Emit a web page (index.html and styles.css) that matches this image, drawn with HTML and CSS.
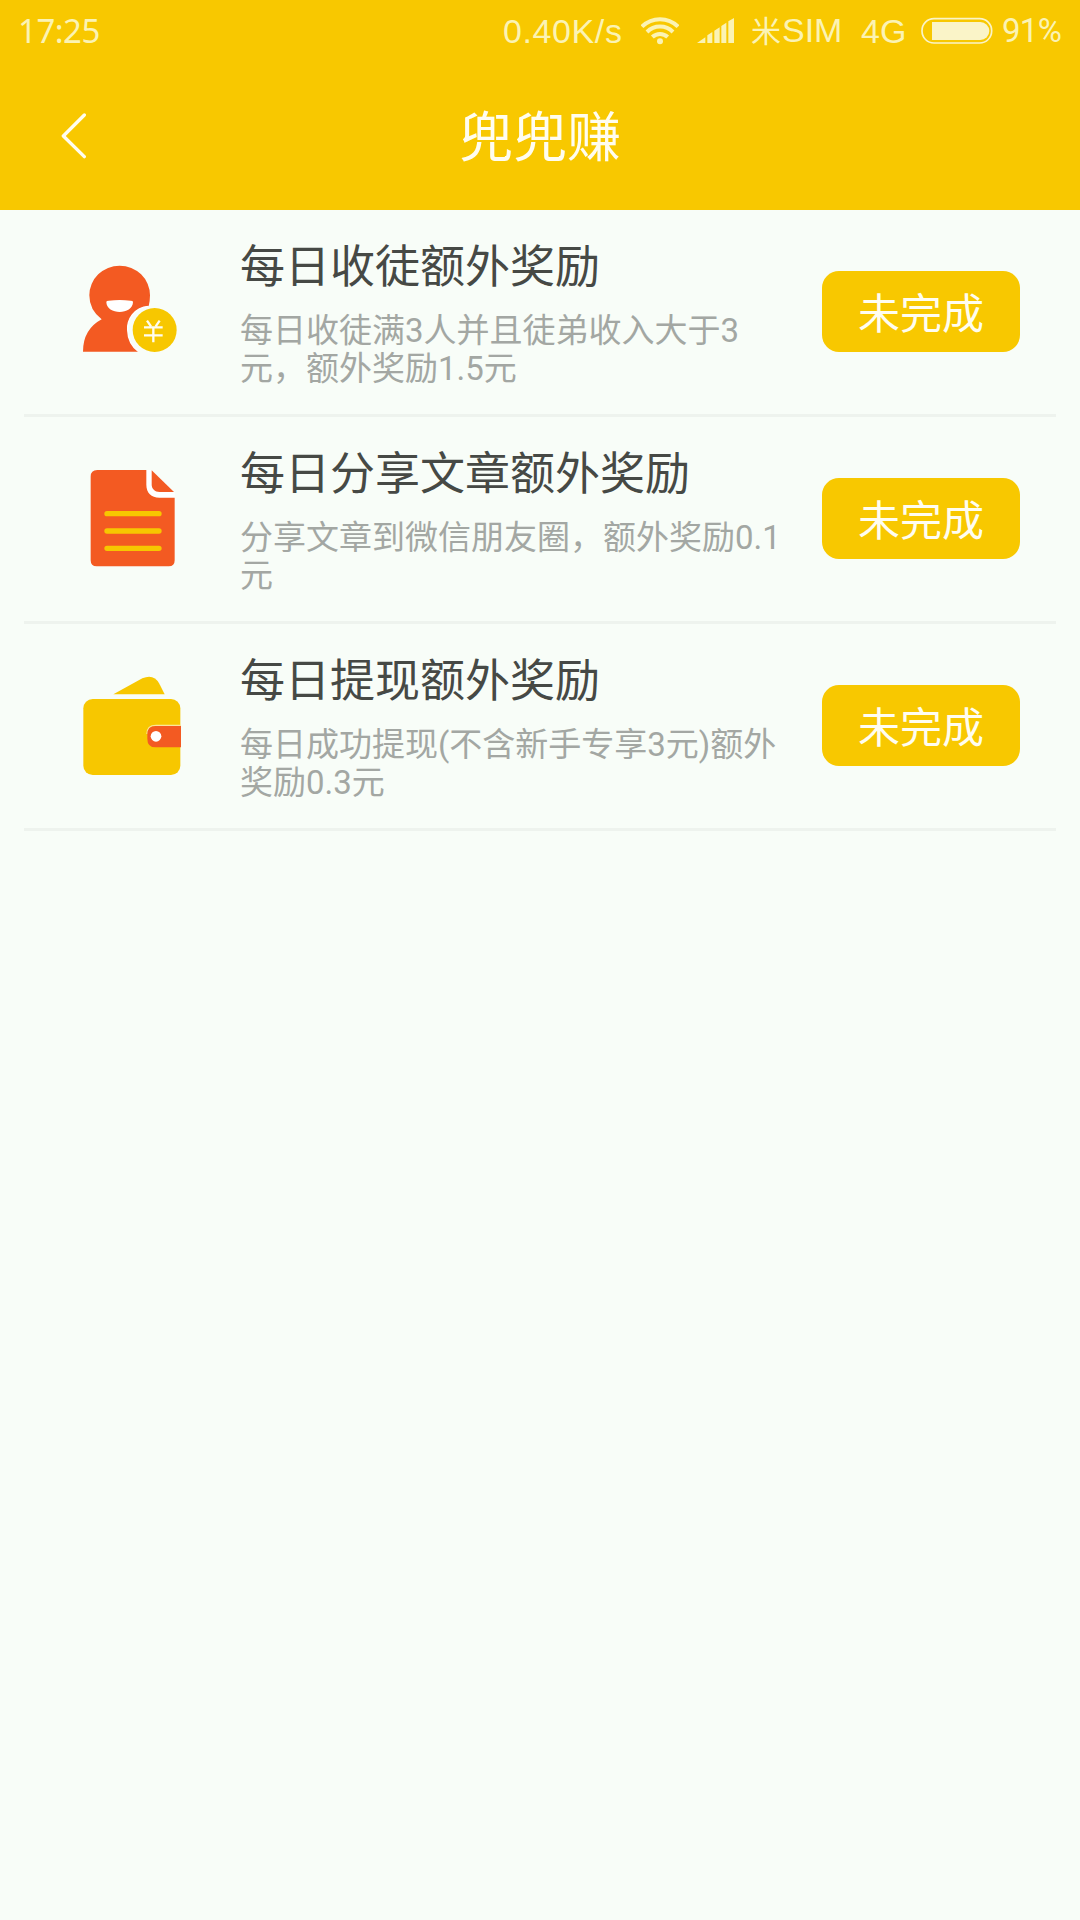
FILE: index.html
```html
<!DOCTYPE html>
<html lang="zh-CN">
<head>
<meta charset="utf-8">
<title>兜兜赚</title>
<link rel="stylesheet" href="styles.css">
</head>
<body>
<header class="header">
  <div class="status">
    <span class="time">17:25</span>
    <span class="speed">0.40K/s</span>
    <svg class="wifi" width="38" height="28" viewBox="0 0 114 84">
      <g fill="none" stroke="currentColor" stroke-width="12">
        <path d="M3 29A76 76 0 0 1 111 29"/>
        <path d="M18 45A55 55 0 0 1 96 45"/>
        <path d="M34 60A33 33 0 0 1 80 60"/>
      </g>
      <circle cx="57" cy="73" r="9" fill="currentColor"/>
    </svg>
    <svg class="signal" width="37" height="26" viewBox="0 0 111 78" fill="currentColor">
      <path d="M0 75L25 58V75ZM31 52L46 42V75H31ZM52 38L68 28V75H52ZM73 24L88 14V75H73ZM94 10L111 0V75H94Z"/>
    </svg>
    <span class="carrier"><span class="mi">米</span>SIM</span>
    <span class="network">4G</span>
    <svg class="battery" width="72" height="28" viewBox="0 0 216 84">
      <rect x="3" y="5" width="209" height="73" rx="36" fill="none" stroke="currentColor" stroke-width="5"/>
      <path d="M33 15H178A26 26 0 0 1 178 69H33Z" fill="currentColor"/>
    </svg>
    <span class="percent">91%</span>
  </div>
  <nav class="nav">
    <svg class="back" width="28" height="50" viewBox="0 0 84 150">
      <path d="M70 12L7 75L70 137" fill="none" stroke="currentColor" stroke-width="10" stroke-linecap="round" stroke-linejoin="round"/>
    </svg>
    <h1 class="page-title">兜兜赚</h1>
  </nav>
</header>
<main class="tasks">
  <section class="task">
    <svg class="icon" viewBox="0 0 420 390">
      <path class="orange" d="M69 335Q69 268 125 238Q88 210 88 166A91 89 0 0 1 270 166Q270 182 266 199C222 202 201 239 203 270Q204 312 236 335Z"/>
      <path class="white" d="M139 186Q139 182 146 182Q179 178 212 182Q219 182 219 186C219 226 139 226 139 186Z"/>
      <path d="M266 199C222 202 201 239 203 270Q204 312 236 335" fill="none" stroke="#fff" stroke-width="4"/>
      <circle class="yellow" cx="284" cy="270" r="66"/>
      <path d="M261 242L273 259M299 242L287 259M252 262H308M252 286H308M280 262V307" fill="none" stroke="#fffdf0" stroke-width="7"/>
    </svg>
    <div class="copy">
      <h2 class="name">每日收徒额外奖励</h2>
      <p class="desc">每日收徒满3人并且徒弟收入大于3<br>元，额外奖励1.5元</p>
    </div>
    <button class="state">未完成</button>
  </section>
  <section class="task">
    <svg class="icon" viewBox="0 -9 420 390">
      <path class="white" d="M258 60H275L344 128V144L270 150L250 120Z"/>
      <path class="orange" d="M112 60H259V104C259 128 274 143 298 143H344V331Q344 349 326 349H110Q92 349 92 331V80Q92 60 112 60Z"/>
      <path class="orange" d="M275 61L342 126H299C284 126 275 117 275 103Z"/>
      <path d="M141 191H297M141 243H297M141 295H297" fill="none" stroke="#f7c700" stroke-width="16" stroke-linecap="round"/>
    </svg>
    <div class="copy">
      <h2 class="name">每日分享文章额外奖励</h2>
      <p class="desc">分享文章到微信朋友圈，额外奖励0.1<br>元</p>
    </div>
    <button class="state">未完成</button>
  </section>
  <section class="task">
    <svg class="icon" viewBox="0 -18 420 390">
      <path class="yellow" d="M160 103L247 55Q281 40 298 71L314 103Z"/>
      <rect class="yellow" x="70" y="117" width="291" height="228" rx="28"/>
      <path d="M363 196H288Q261 196 261 222" fill="none" stroke="#fbe69a" stroke-width="4"/>
      <path class="orange" d="M363 198H287Q262 198 262 223V236Q262 262 287 262H363Z"/>
      <circle class="white" cx="288" cy="229" r="16"/>
    </svg>
    <div class="copy">
      <h2 class="name">每日提现额外奖励</h2>
      <p class="desc">每日成功提现(不含新手专享3元)额外<br>奖励0.3元</p>
    </div>
    <button class="state">未完成</button>
  </section>
</main>
</body>
</html>
```
FILE: styles.css
```css
* { box-sizing: border-box; margin: 0; padding: 0; }
body {
  min-height: 1920px;
  background: #f8fdf8;
  font-family: Roboto, "Noto Sans CJK SC", sans-serif;
}
.header { height: 210px; background: #f8c800; color: #fffdf0; }
.status {
  display: flex;
  align-items: center;
  height: 62px;
  padding: 0 18px;
  color: #fbf3b4;
  font: 34px/62px "Liberation Sans", "Noto Sans CJK SC", sans-serif;
  white-space: nowrap;
}
.status svg { flex: none; }
.time { width: 82px; font-family: "Noto Sans", sans-serif; font-size: 33px; letter-spacing: -0.5px; }
.speed { width: 120px; margin-left: 403px; letter-spacing: 0.6px; }
.wifi { margin-left: 18px; }
.signal { margin-left: 18px; }
.carrier { width: 92px; margin-left: 17px; font-size: 34px; }
.mi { margin-right: 1px; font-size: 30px; }
.network { width: 46px; margin-left: 18px; }
.battery { margin-left: 14px; color: #faf4c8; }
.percent { width: 60px; margin-left: 9px; font-family: Roboto, sans-serif; font-size: 33px; letter-spacing: -0.7px; }
.nav {
  display: grid;
  grid-template-columns: 89px 1fr 89px;
  align-items: center;
  height: 148px;
}
.back { justify-self: end; }
.page-title { padding-top: 6px; text-align: center; font-size: 54px; font-weight: 400; line-height: 80px; }
.tasks { padding: 0 24px; }
.task {
  display: flex;
  height: 207px;
  padding: 30px 36px 0;
  border-bottom: 3px solid #eef3ee;
}
.icon { flex: none; width: 140px; height: 130px; }
.orange { fill: #f35a22; }
.yellow { fill: #f7c700; }
.white { fill: #fff; }
.copy { flex: 1; margin-left: 40px; padding-top: 3px; white-space: nowrap; }
.name { color: #464945; font-size: 45px; font-weight: 400; line-height: 50px; }
.desc { margin-top: 19px; color: #a3a7a3; font-size: 33px; line-height: 38px; }
.state {
  flex: none;
  width: 198px;
  height: 81px;
  margin-top: 31px;
  padding-bottom: 2px;
  border: 0;
  border-radius: 17px;
  background: #f8c800;
  color: #fffdf0;
  font-family: inherit;
  font-size: 42px;
}
```
